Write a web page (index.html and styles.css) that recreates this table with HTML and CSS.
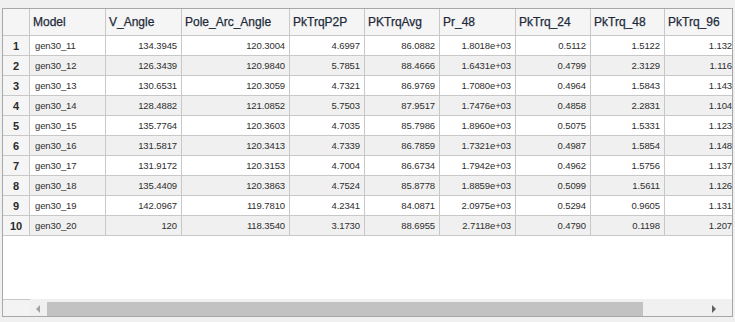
FILE: index.html
```html
<!DOCTYPE html>
<html>
<head>
<meta charset="utf-8">
<link rel="stylesheet" href="styles.css">
</head>
<body>
<div class="frame">
  <div class="viewport">
    <div class="grid">
      <div class="hd corner"></div>
      <div class="hd">Model</div>
      <div class="hd">V_Angle</div>
      <div class="hd">Pole_Arc_Angle</div>
      <div class="hd">PkTrqP2P</div>
      <div class="hd">PKTrqAvg</div>
      <div class="hd">Pr_48</div>
      <div class="hd">PkTrq_24</div>
      <div class="hd">PkTrq_48</div>
      <div class="hd last">PkTrq_96</div>

      <div class="rn">1</div><div class="c txt">gen30_11</div><div class="c">134.3945</div><div class="c">120.3004</div><div class="c">4.6997</div><div class="c">86.0882</div><div class="c">1.8018e+03</div><div class="c">0.5112</div><div class="c">1.5122</div><div class="c last">1.132</div>
      <div class="rn alt">2</div><div class="c alt txt">gen30_12</div><div class="c alt">126.3439</div><div class="c alt">120.9840</div><div class="c alt">5.7851</div><div class="c alt">88.4666</div><div class="c alt">1.6431e+03</div><div class="c alt">0.4799</div><div class="c alt">2.3129</div><div class="c alt last">1.116</div>
      <div class="rn">3</div><div class="c txt">gen30_13</div><div class="c">130.6531</div><div class="c">120.3059</div><div class="c">4.7321</div><div class="c">86.9769</div><div class="c">1.7080e+03</div><div class="c">0.4964</div><div class="c">1.5843</div><div class="c last">1.143</div>
      <div class="rn alt">4</div><div class="c alt txt">gen30_14</div><div class="c alt">128.4882</div><div class="c alt">121.0852</div><div class="c alt">5.7503</div><div class="c alt">87.9517</div><div class="c alt">1.7476e+03</div><div class="c alt">0.4858</div><div class="c alt">2.2831</div><div class="c alt last">1.104</div>
      <div class="rn">5</div><div class="c txt">gen30_15</div><div class="c">135.7764</div><div class="c">120.3603</div><div class="c">4.7035</div><div class="c">85.7986</div><div class="c">1.8960e+03</div><div class="c">0.5075</div><div class="c">1.5331</div><div class="c last">1.123</div>
      <div class="rn alt">6</div><div class="c alt txt">gen30_16</div><div class="c alt">131.5817</div><div class="c alt">120.3413</div><div class="c alt">4.7339</div><div class="c alt">86.7859</div><div class="c alt">1.7321e+03</div><div class="c alt">0.4987</div><div class="c alt">1.5854</div><div class="c alt last">1.148</div>
      <div class="rn">7</div><div class="c txt">gen30_17</div><div class="c">131.9172</div><div class="c">120.3153</div><div class="c">4.7004</div><div class="c">86.6734</div><div class="c">1.7942e+03</div><div class="c">0.4962</div><div class="c">1.5756</div><div class="c last">1.137</div>
      <div class="rn alt">8</div><div class="c alt txt">gen30_18</div><div class="c alt">135.4409</div><div class="c alt">120.3863</div><div class="c alt">4.7524</div><div class="c alt">85.8778</div><div class="c alt">1.8859e+03</div><div class="c alt">0.5099</div><div class="c alt">1.5611</div><div class="c alt last">1.126</div>
      <div class="rn">9</div><div class="c txt">gen30_19</div><div class="c">142.0967</div><div class="c">119.7810</div><div class="c">4.2341</div><div class="c">84.0871</div><div class="c">2.0975e+03</div><div class="c">0.5294</div><div class="c">0.9605</div><div class="c last">1.131</div>
      <div class="rn alt">10</div><div class="c alt txt">gen30_20</div><div class="c alt">120</div><div class="c alt">118.3540</div><div class="c alt">3.1730</div><div class="c alt">88.6955</div><div class="c alt">2.7118e+03</div><div class="c alt">0.4790</div><div class="c alt">0.1198</div><div class="c alt last">1.207</div>
    </div>
  </div>
  <div class="hbar">
    <div class="hcorner"></div>
    <div class="track">
      <div class="btn"><span class="arrow-left"></span></div>
      <div class="thumb"></div>
      <div class="gap"></div>
      <div class="btn btn-right"><span class="arrow-right"></span></div>
    </div>
  </div>
</div>
</body>
</html>
```

FILE: styles.css
```css
html, body {
  margin: 0;
  padding: 0;
}
body {
  background: #f0f0f0;
  width: 735px;
  height: 322px;
  overflow: hidden;
  font-family: "Liberation Sans", Arial, sans-serif;
}
.frame {
  margin: 8px 0 0 2px;
  width: 731px;
  height: 309px;
  box-sizing: border-box;
  border: 1px solid #a8a8a8;
  background: #ffffff;
  display: flex;
  flex-direction: column;
}
.viewport {
  height: 290px;
  overflow: hidden;
  background: #ffffff;
}
.grid {
  display: grid;
  grid-template-columns: 27px 76px 76px 108px 75px 75px 76px 75px 74px 71px;
  grid-template-rows: 27px;
  grid-auto-rows: 20px;
  width: max-content;
}
.hd, .rn, .c {
  box-sizing: border-box;
  border-right: 1px solid #c8c8c8;
  border-bottom: 1px solid #c8c8c8;
  display: flex;
  align-items: center;
  white-space: nowrap;
  overflow: hidden;
}
.hd {
  background: #f5f5f5;
  font-size: 12px;
  color: #1e2a3a;
  padding: 0 3px;
  -webkit-text-stroke: 0.25px #1e2a3a;
}
.rn {
  background: #f5f5f5;
  justify-content: center;
  font-size: 11px;
  font-weight: bold;
  color: #2a2a2a;
}
.c {
  background: #ffffff;
  justify-content: flex-end;
  padding: 0 4px 0 4px;
  font-size: 9.5px;
  letter-spacing: -0.1px;
  color: #2e2e2e;
}
.c.txt {
  justify-content: flex-start;
  padding-left: 5px;
}
.c.alt {
  background: #f0f0f0;
}
.rn.alt {
  background: #f5f5f5;
}
.last {
  border-right: none;
}
.hbar {
  height: 17px;
  display: flex;
  background: #f0f0f0;
}
.hcorner {
  width: 27px;
  box-sizing: border-box;
  border-top: 1px solid #c8c8c8;
  background: #f3f3f3;
}
.track {
  flex: 1;
  display: flex;
  align-items: stretch;
  background: #f0f0f0;
  padding: 3px 0 0 0;
  box-sizing: border-box;
}
.btn {
  width: 17px;
  display: flex;
  align-items: center;
  justify-content: center;
}
.btn-right {
  width: 26px;
  justify-content: flex-start;
  padding-left: 6px;
  box-sizing: border-box;
}
.thumb {
  width: 596px;
  background: #c2c2c2;
}
.gap {
  flex: 1;
}
.arrow-left {
  width: 0;
  height: 0;
  border-top: 4px solid transparent;
  border-bottom: 4px solid transparent;
  border-right: 4px solid #a3a3a3;
  margin-right: 2px;
}
.arrow-right {
  width: 0;
  height: 0;
  border-top: 4px solid transparent;
  border-bottom: 4px solid transparent;
  border-left: 4px solid #606060;
}
```
